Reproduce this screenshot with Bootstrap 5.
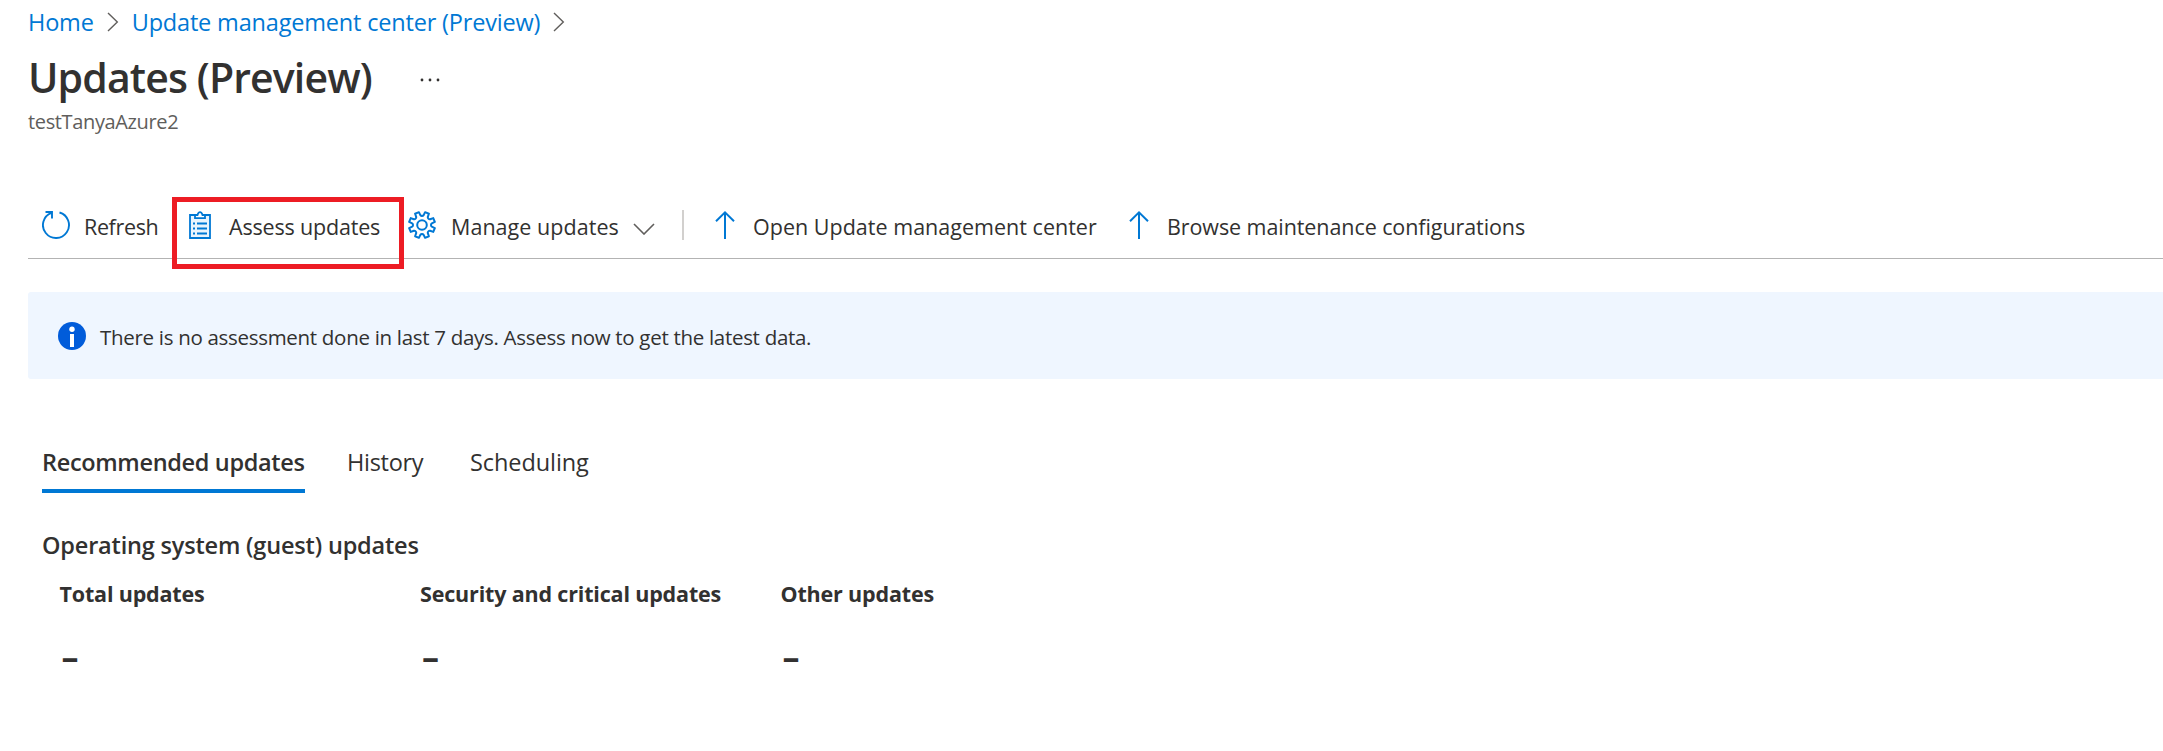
<!DOCTYPE html>
<html lang="en">
<head>
<meta charset="utf-8">
<meta name="viewport" content="width=device-width, initial-scale=1">
<title>Updates (Preview)</title>
<link href="https://cdn.jsdelivr.net/npm/bootstrap@5.3.0/dist/css/bootstrap.min.css" rel="stylesheet">
<style>
  body { font-family: "Open Sans", "Noto Sans", sans-serif; font-size: 21.5px; line-height: 30px; color: #323130; background: #fff; overflow: hidden; }
  svg { flex: none; display: block; }
  .page { padding: 6px 0 0 28px; }
  .crumbs { height: 32px; font-size: 23.5px; line-height: 32px; letter-spacing: -.18px; }
  .crumbs a { color: #0078d4; }
  .crumbs svg { margin: 0 13px; }
  .page-title { margin-top: 11px; font-size: 41px; line-height: 56px; font-weight: 600; letter-spacing: -.87px; }
  .dots { margin: 17px 0 0 48px; }
  .subtitle { margin-top: 4px; height: 25px; font-size: 20px; line-height: 26px; letter-spacing: -.36px; color: #605e5c; }
  .toolbar { margin-top: 58px; height: 67px; padding-left: 14px; border-bottom: 1px solid #b3b3b3; }
  .tool { height: 66px; gap: 14px; color: inherit; white-space: nowrap; flex: none; }
  .tool span { padding-top: 3px; }
  .w-refresh { width: 144px; } .w-refresh span { letter-spacing: -.36px; }
  .w-assess { width: 222px; } .w-assess span { letter-spacing: -.18px; margin-left: 1px; }
  .w-manage { width: 274px; } .w-manage span { letter-spacing: .05px; margin-left: 1px; }
  .w-manage .caret { margin-top: 8px; }
  .w-open { width: 414px; } .w-open span { letter-spacing: .02px; }
  .w-browse span { letter-spacing: -.08px; }
  .highlight { left: -14px; top: 5px; width: 232px; height: 72px; border: 5px solid #ed1c24; }
  .divider { width: 2px; height: 30px; background: #d2d0ce; margin-right: 27px; }
  .notice { margin-top: 33px; height: 87px; padding-left: 30px; gap: 14px; background: #eff6ff; border-radius: 3px 0 0 3px; font-size: 20.5px; letter-spacing: -.3px; }
  .notice span { padding-top: 2px; }
  .tabs { margin: 67px 0 0 14px; font-size: 23.5px; line-height: 33px; }
  .tabs a { color: inherit; padding-bottom: 10px; border-bottom: 4px solid transparent; white-space: nowrap; }
  .tabs a.current { width: 263px; font-weight: 600; letter-spacing: -.33px; border-color: #0078d4; }
  .tab-history { margin-left: 42px; width: 77px; letter-spacing: -.3px; }
  .tab-scheduling { margin-left: 46px; letter-spacing: -.08px; }
  .section { margin: 36px 0 0 14px; font-size: 23.5px; line-height: 32px; font-weight: 600; letter-spacing: -.18px; }
  .stats { margin: 18px 0 0 31.5px; }
  .stat { width: 360.5px; font-weight: 700; letter-spacing: -.17px; }
  .stat-value { margin-top: 25px; font-size: 34px; line-height: 44px; padding-left: 2px; }
</style>
</head>
<body>
<main class="page">
  <nav class="crumbs d-flex align-items-center" aria-label="Breadcrumb">
    <a class="text-decoration-none" href="#">Home</a>
    <svg width="12" height="20" viewBox="0 0 12 20" fill="none" stroke="#605e5c" stroke-width="1.4"><path d="M1 1l9.300 9L1 19"/></svg>
    <a class="text-decoration-none" href="#">Update management center (Preview)</a>
    <svg width="12" height="20" viewBox="0 0 12 20" fill="none" stroke="#605e5c" stroke-width="1.4"><path d="M1 1l9.300 9L1 19"/></svg>
  </nav>
  <div class="d-flex align-items-center">
    <h1 class="page-title mb-0">Updates (Preview)</h1>
    <svg class="dots" width="20" height="4" viewBox="0 0 20 4" fill="#323130"><circle cx="2" cy="2" r="1.4"/><circle cx="10" cy="2" r="1.4"/><circle cx="18" cy="2" r="1.4"/></svg>
  </div>
  <div class="subtitle">testTanyaAzure2</div>

  <div class="toolbar d-flex align-items-center">
    <a href="#" class="tool w-refresh d-flex align-items-center text-decoration-none">
      <svg width="28" height="28" viewBox="0 0 28 28" fill="none" stroke="#0078d4" stroke-width="1.9"><path d="M17.500 1.500A13 13 0 1 1 9.500 1.800M3.500 1H10V7.500"/></svg>
      <span>Refresh</span></a>
    <a href="#" class="tool w-assess d-flex align-items-center text-decoration-none position-relative">
      <svg width="28" height="28" viewBox="0 0 28 28" fill="none" stroke="#0078d4" stroke-width="1.800"><path fill="#e9f4fd" d="M9 4H4V27H24V4H19"/><path fill="#fff" d="M9 7.200V4H11.500C12.500 .200 15.500 .200 16.500 4H19V7.200Z"/><path d="M7 12.500H9M11 12.500H21M7 17.500H9M11 17.500H21M7 22.500H9M11 22.500H21"/></svg>
      <span>Assess updates</span>
      <i class="highlight position-absolute"></i></a>
    <a href="#" class="tool w-manage d-flex align-items-center text-decoration-none">
      <svg width="28" height="28" viewBox="-14 -14 28 28" fill="none" stroke="#0078d4" stroke-width="2" stroke-linejoin="round"><circle r="4.800"/><path d="M1.650-9.860L3.080-12.840L6.900-11.250L5.810-8.140A2 2 0 0 0 8.140-5.810L11.250-6.900L12.840-3.080L9.860-1.650A2 2 0 0 0 9.860 1.650L12.840 3.080L11.250 6.900L8.140 5.810A2 2 0 0 0 5.810 8.140L6.900 11.250L3.080 12.840L1.650 9.860A2 2 0 0 0-1.650 9.860L-3.080 12.840L-6.900 11.250L-5.810 8.140A2 2 0 0 0-8.140 5.810L-11.250 6.900L-12.840 3.080L-9.860 1.650A2 2 0 0 0-9.860-1.650L-12.840-3.080L-11.250-6.900L-8.140-5.810A2 2 0 0 0-5.810-8.140L-6.900-11.250L-3.080-12.840L-1.650-9.860A2 2 0 0 0 1.650-9.860Z"/></svg>
      <span>Manage updates</span>
      <svg class="caret" width="22" height="12" viewBox="0 0 22 12" fill="none" stroke="#605e5c" stroke-width="1.600"><path d="M1 1l10 10L21 1"/></svg></a>
    <div class="divider"></div>
    <a href="#" class="tool w-open d-flex align-items-center text-decoration-none">
      <svg width="28" height="28" viewBox="0 0 28 28" fill="none" stroke="#0078d4" stroke-width="2"><path d="M14 28V1.500M5 10.200L14 1.400L23 10.200"/></svg>
      <span>Open Update management center</span></a>
    <a href="#" class="tool w-browse d-flex align-items-center text-decoration-none">
      <svg width="28" height="28" viewBox="0 0 28 28" fill="none" stroke="#0078d4" stroke-width="2"><path d="M14 28V1.500M5 10.200L14 1.400L23 10.200"/></svg>
      <span>Browse maintenance configurations</span></a>
  </div>

  <div class="notice d-flex align-items-center" role="status">
    <svg width="28" height="28" viewBox="0 0 28 28"><circle cx="14" cy="14" r="14" fill="#015cda"/><circle cx="14" cy="7.300" r="2.700" fill="#fff"/><path d="M12 12h4v13h-4z" fill="#fff"/></svg>
    <span>There is no assessment done in last 7 days. Assess now to get the latest data.</span>
  </div>

  <nav class="tabs d-flex">
    <a href="#" class="current text-decoration-none">Recommended updates</a>
    <a href="#" class="tab-history text-decoration-none">History</a>
    <a href="#" class="tab-scheduling text-decoration-none">Scheduling</a>
  </nav>
  <h2 class="section mb-0">Operating system (guest) updates</h2>
  <div class="stats d-flex">
    <div class="stat">Total updates<div class="stat-value">–</div></div>
    <div class="stat">Security and critical updates<div class="stat-value">–</div></div>
    <div class="stat">Other updates<div class="stat-value">–</div></div>
  </div>
</main>
<script src="https://cdn.jsdelivr.net/npm/bootstrap@5.3.0/dist/js/bootstrap.bundle.min.js"></script>
</body>
</html>
